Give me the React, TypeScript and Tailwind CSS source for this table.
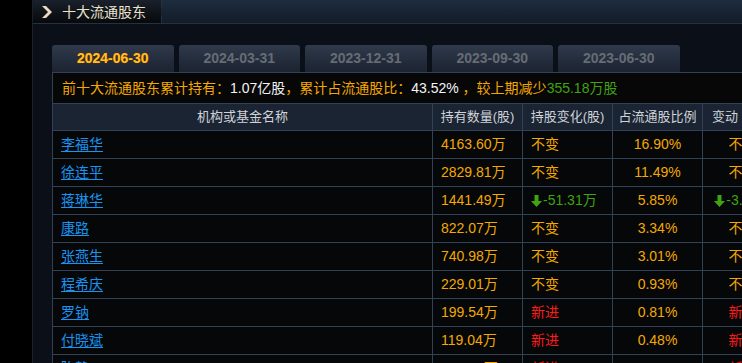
import type { ReactNode } from 'react'

type Row = {
  name: string
  hold: string
  change: string
  ratio: string
  move: string
}

const rows: Row[] = [
  { name: '李福华', hold: '4163.60万', change: '不变', ratio: '16.90%', move: '不变' },
  { name: '徐连平', hold: '2829.81万', change: '不变', ratio: '11.49%', move: '不变' },
  { name: '蒋琳华', hold: '1441.49万', change: '-51.31万', ratio: '5.85%', move: '-3.46%' },
  { name: '康路', hold: '822.07万', change: '不变', ratio: '3.34%', move: '不变' },
  { name: '张燕生', hold: '740.98万', change: '不变', ratio: '3.01%', move: '不变' },
  { name: '程希庆', hold: '229.01万', change: '不变', ratio: '0.93%', move: '不变' },
  { name: '罗钠', hold: '199.54万', change: '新进', ratio: '0.81%', move: '新进' },
  { name: '付晓斌', hold: '119.04万', change: '新进', ratio: '0.48%', move: '新进' },
  { name: '陈静', hold: '108.53万', change: '新进', ratio: '0.44%', move: '新进' },
]

const tabs = ['2024-06-30', '2024-03-31', '2023-12-31', '2023-09-30', '2023-06-30']

const font = "font-['Liberation_Sans','Noto_Sans_CJK_SC',sans-serif]"

function DownArrow() {
  return (
    <svg width="11" height="12" viewBox="0 0 11 12" className="mr-[1px] shrink-0">
      <polygon points="3.5,0 7.5,0 7.5,6 11,6 5.5,12 0,6 3.5,6" fill="#3fa312" />
    </svg>
  )
}

function ChangeCell({ v, center }: { v: string; center?: boolean }): ReactNode {
  if (v === '新进') return <span className="text-[#ff1a1a]">{v}</span>
  if (v.startsWith('-'))
    return (
      <span className={`flex items-center text-[#3fa312] ${center ? 'justify-center' : ''}`}>
        <DownArrow />
        {v}
      </span>
    )
  return <span className="text-[#f5a800]">{v}</span>
}

export default function App() {
  return (
    <div className={`flex h-[363px] w-[742px] overflow-hidden bg-black ${font}`}>
      <div className="w-[32px] shrink-0 bg-black" />
      <div className="flex min-w-0 flex-1 flex-col border-l border-[#1a212c] bg-[#0b0f17]">
        {/* title bar */}
        <div className="flex h-[24px] shrink-0 border-b border-[#27303c] bg-gradient-to-b from-[#1d2c3f] to-[#131c29]">
          <div className="relative flex w-[128px] items-center bg-gradient-to-b from-[#1a212c] to-[#07090c] pl-[9px]">
            <svg width="10" height="12" viewBox="0 0 10 12" className="mr-[10px]">
              <polygon points="0,0 4,0 10,6 4,12 0,12 6,6" fill="#eadbc0" />
            </svg>
            <span className="text-[14px] leading-none text-[#ece2cf]">十大流通股东</span>
            <div className="absolute right-[-4px] top-[8px] h-0 w-0 border-y-[4px] border-l-[4px] border-y-transparent border-l-[#1b2332]" />
          </div>
          <div className="w-px bg-[#27303c]" />
        </div>

        <div className="flex min-w-0 flex-1 flex-col pl-[19px] pt-[21px]">
          {/* date tabs */}
          <div className="flex h-[27px] shrink-0 gap-[5px]">
            {tabs.map((t, i) => (
              <div
                key={t}
                className={`flex w-[121.5px] items-center justify-center rounded-t-[3px] bg-gradient-to-b from-[#2f3a4b] to-[#1c2331] text-[14px] font-bold ${
                  i === 0 ? 'text-[#ffc21a] [text-shadow:0_0_1px_#c83a00]' : 'text-[#666c74]'
                }`}
              >
                {t}
              </div>
            ))}
          </div>

          {/* table */}
          <table className="w-[730px] table-fixed border-collapse border border-[#334156] text-[14px]">
            <colgroup>
              <col className="w-[380px]" />
              <col className="w-[90px]" />
              <col className="w-[90px]" />
              <col className="w-[90px]" />
              <col className="w-[80px]" />
            </colgroup>
            <tbody>
              <tr className="h-[31px] bg-[#070707]">
                <td colSpan={5} className="border border-[#334156] pl-[9px] whitespace-nowrap text-[#f5a800]">
                  前十大流通股东累计持有：<span className="text-[#f2f4f6]">1.07亿股</span>，累计占流通股比：
                  <span className="text-[#f2f4f6]">43.52%</span> ，较上期减少
                  <span className="text-[#3fa312]">355.18万股</span>
                </td>
              </tr>
              <tr className="h-[27px] bg-[#1b2433] text-[13px] text-[#cfd3d8]">
                <td className="border border-[#334156] text-center">机构或基金名称</td>
                <td className="border border-[#334156] text-center">持有数量(股)</td>
                <td className="border border-[#334156] text-center">持股变化(股)</td>
                <td className="border border-[#334156] text-center">占流通股比例</td>
                <td className="border border-[#334156] pl-[9px] whitespace-nowrap">变动</td>
              </tr>
              {rows.map((r) => (
                <tr key={r.name} className="h-[28px] bg-[#050708]">
                  <td className="border border-[#334156] pl-[8px]">
                    <a className="text-[#1a93f0] underline underline-offset-2">{r.name}</a>
                  </td>
                  <td className="border border-[#334156] pl-[8px] text-[#f5a800]">{r.hold}</td>
                  <td className="border border-[#334156] pl-[8px] whitespace-nowrap">
                    <ChangeCell v={r.change} />
                  </td>
                  <td className="border border-[#334156] text-center text-[#f5a800]">{r.ratio}</td>
                  <td className="border border-[#334156] text-center whitespace-nowrap">
                    <ChangeCell v={r.move} center />
                  </td>
                </tr>
              ))}
            </tbody>
          </table>
        </div>
      </div>
    </div>
  )
}
